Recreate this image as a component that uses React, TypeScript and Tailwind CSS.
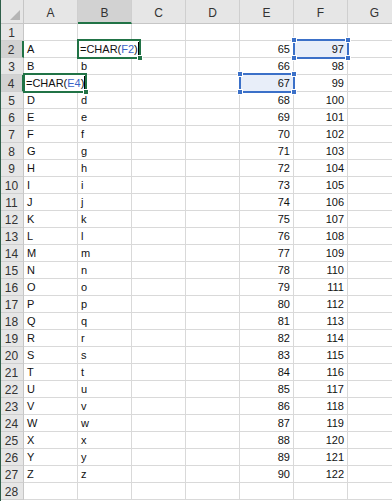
import * as React from "react";

const COLS = ["A", "B", "C", "D", "E", "F", "G"];
const ROWS = Array.from({ length: 28 }, (_, i) => i + 1);

const grid = "border-r border-b border-[#d9d9d9]";

function Handles() {
  // small squares on the four corners of a range selection
  const sq = "absolute h-[6px] w-[6px] bg-[#3b70c8] border border-white";
  return (
    <>
      <span className={`${sq} -left-[4px] -top-[4px]`} />
      <span className={`${sq} -right-[4px] -top-[4px]`} />
      <span className={`${sq} -left-[4px] -bottom-[4px]`} />
      <span className={`${sq} -right-[4px] -bottom-[4px]`} />
    </>
  );
}

function EditBox({ target }: { target: string }) {
  // cell being edited: text spills over the next cell, box grows with it
  return (
    <div className="absolute -left-[1px] -top-[2px] z-20 flex h-[20px] min-w-[58px] items-center border-2 border-[#217346] bg-white pl-[1px]">
      <span className="whitespace-nowrap leading-none">
        =CHAR(<span className="text-[#3a64c8]">{target}</span>)
      </span>
      <span className="ml-auto h-[14px] w-px shrink-0 bg-black" />
      <span className="absolute -bottom-[4px] -right-[4px] h-[6px] w-[6px] border border-white bg-[#217346]" />
    </div>
  );
}

function cellText(row: number, col: string): React.ReactNode {
  if (row < 2 || row > 27) return null;
  const n = row - 2;
  if (col === "A") return row === 4 ? null : String.fromCharCode(65 + n);
  if (col === "B") return row === 2 || row === 4 ? null : String.fromCharCode(97 + n);
  if (col === "E") return 65 + n;
  if (col === "F") return 97 + n;
  return null;
}

function Cell({ row, col }: { row: number; col: string }) {
  const value = cellText(row, col);
  const numeric = col === "E" || col === "F";
  const picked = (row === 2 && col === "F") || (row === 4 && col === "E");

  return (
    <div
      className={`relative ${grid} flex items-center px-[3px] pt-px ${
        numeric ? "justify-end" : "justify-start"
      } ${picked ? "bg-[#e8eef9]" : ""}`}
    >
      {value !== null && <span className="leading-none">{value}</span>}

      {row === 2 && col === "B" && <EditBox target="F2" />}
      {row === 4 && col === "A" && <EditBox target="E4" />}

      {picked && (
        <div className="absolute -left-[1px] -top-[2px] z-10 h-[20px] w-[56px] border-2 border-[#3b70c8]">
          <Handles />
        </div>
      )}
    </div>
  );
}

export default function App() {
  return (
    <div
      className="relative h-[501px] w-[392px] overflow-hidden bg-white text-[11px] text-[#111]"
      style={{ fontFamily: "'Liberation Sans', Arial, sans-serif" }}
    >
      <div className="grid grid-cols-[24px_repeat(7,54px)] grid-rows-[24px_repeat(28,17px)]">
        <div className="relative border-r border-b border-[#c6c6c6] bg-[#e6e6e6]">
          <svg className="absolute bottom-[3px] right-[3px]" width="10" height="10" viewBox="0 0 10 10">
            <polygon points="10,0 10,10 0,10" fill="#b5b5b5" />
          </svg>
        </div>

        {COLS.map((c) => (
          <div
            key={c}
            className={`flex items-center justify-center border-r border-[#cfcfcf] pt-[3px] text-[12px] text-[#333] ${
              c === "B"
                ? "border-b-2 border-b-[#217346] bg-[#d2d2d2]"
                : "border-b border-b-[#c6c6c6] bg-[#e6e6e6]"
            }`}
          >
            {c}
          </div>
        ))}

        {ROWS.map((r) => (
          <React.Fragment key={r}>
            <div
              className={`flex items-center justify-center border-b border-[#cfcfcf] pt-px text-[12px] text-[#333] ${
                r === 2 || r === 4
                  ? "border-r-2 border-r-[#217346] bg-[#d2d2d2]"
                  : "border-r border-r-[#c6c6c6] bg-[#e6e6e6]"
              }`}
            >
              {r}
            </div>
            {COLS.map((c) => (
              <Cell key={c} row={r} col={c} />
            ))}
          </React.Fragment>
        ))}
      </div>
      <div className="absolute left-0 top-0 h-full w-px bg-[#2f5f4a]" />
    </div>
  );
}
